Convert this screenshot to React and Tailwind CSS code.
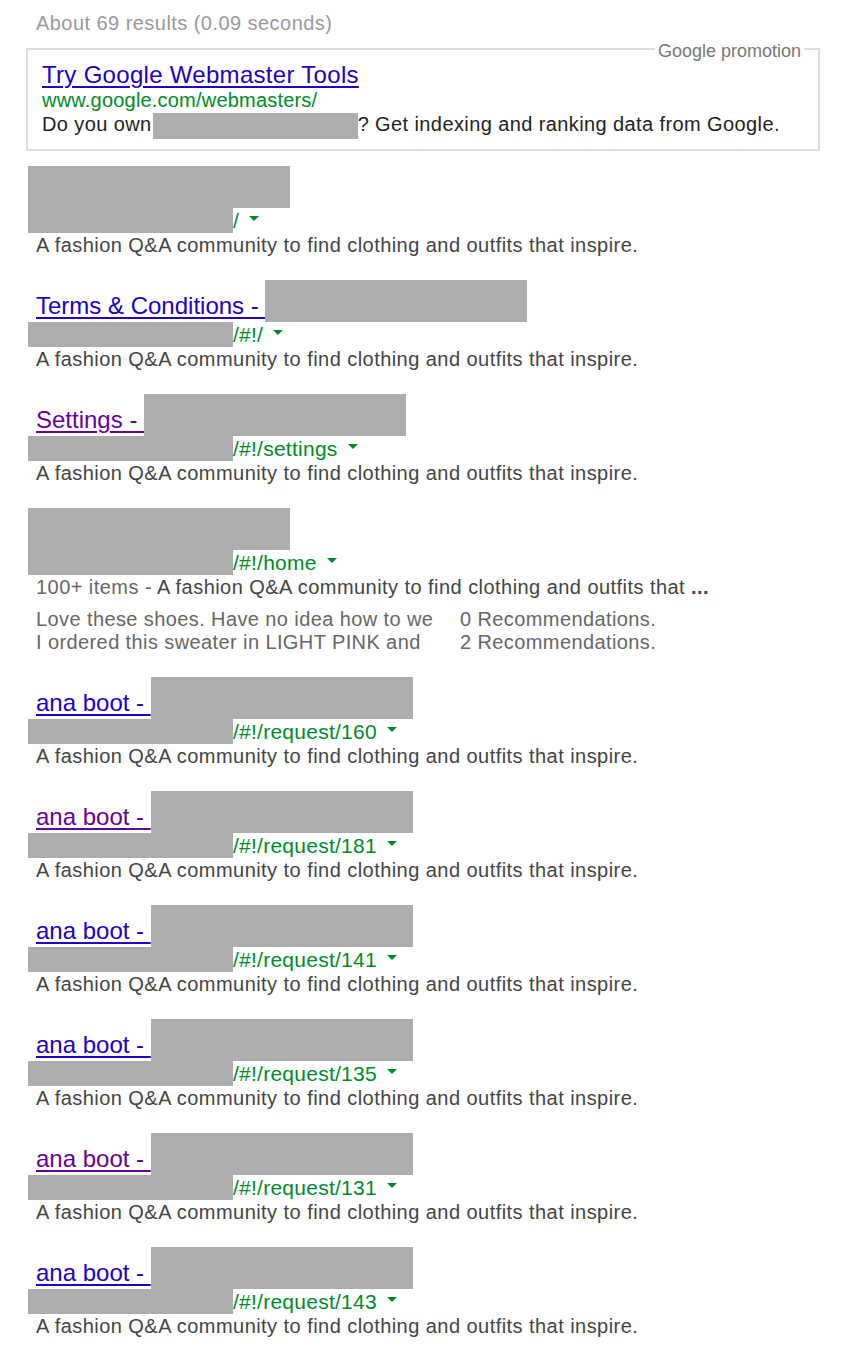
const DESC = "A fashion Q&A community to find clothing and outfits that inspire.";

const results = [
  { title: null, path: "/" },
  { title: "Terms & Conditions - ", visited: false, path: "/#!/" },
  { title: "Settings - ", visited: true, path: "/#!/settings" },
  { title: null, path: "/#!/home", items: true },
  { title: "ana boot - ", visited: false, path: "/#!/request/160" },
  { title: "ana boot - ", visited: true, path: "/#!/request/181" },
  { title: "ana boot - ", visited: false, path: "/#!/request/141" },
  { title: "ana boot - ", visited: false, path: "/#!/request/135" },
  { title: "ana boot - ", visited: true, path: "/#!/request/131" },
  { title: "ana boot - ", visited: false, path: "/#!/request/143" },
];

function Result({ r, first }) {
  return (
    <div className={first ? "mt-[28px]" : "mt-[36px]"}>
      {/* title line, the grey redaction rises above it */}
      <div className="flex h-[29px] items-end">
        {r.title && (
          <a
            href="#"
            className={
              "self-start whitespace-pre text-[24px] leading-[26px] underline underline-offset-[3px] " +
              (r.visited ? "text-[#660099]" : "text-[#2200c1]")
            }
          >
            {r.title}
          </a>
        )}
        <div className={"h-[42px] w-[262px] shrink-0 bg-[#adadad] " + (r.title ? "" : "-ml-[8px]")} />
      </div>

      {/* url line */}
      <div className="-ml-[8px] flex h-[25px] items-start">
        <div className="h-[25px] w-[205px] shrink-0 bg-[#adadad]" />
        <span className="text-[21px] leading-[25px] tracking-[0.25px] text-[#008b2a]">{r.path}</span>
        <span className="ml-[10px] mt-[8px] h-0 w-0 border-x-[5.5px] border-t-[5px] border-x-transparent border-t-[#008b2a]" />
      </div>

      {r.items ? (
        <>
          <p className="text-[20px] leading-[24px] tracking-[0.45px] text-[#444]">
            <span className="text-[#666]">100+ items - </span>
            A fashion Q&A community to find clothing and outfits that <b>...</b>
          </p>
          <div className="mt-[9px] grid grid-cols-[424px_auto] text-[20px] leading-[23px] tracking-[0.4px] text-[#666]">
            <span className="whitespace-nowrap">Love these shoes. Have no idea how to we</span>
            <span>0 Recommendations.</span>
            <span className="whitespace-nowrap">I ordered this sweater in LIGHT PINK and</span>
            <span>2 Recommendations.</span>
          </div>
        </>
      ) : (
        <p className="text-[20px] leading-[24px] tracking-[0.45px] text-[#444]">{DESC}</p>
      )}
    </div>
  );
}

export default function App() {
  return (
    <div className="min-h-[1353px] w-[850px] bg-white font-['Liberation_Sans',Arial,sans-serif]">
      <p className="pl-[36px] pt-[11px] text-[20px] leading-[24px] tracking-[0.45px] text-[#999]">
        About 69 results (0.09 seconds)
      </p>

      {/* promotion box */}
      <div className="relative ml-[26px] mt-[13px] w-[794px] border-2 border-[#dddddd] px-[14px] pb-[13px] pt-[12px]">
        <span className="absolute -top-[9px] right-[14px] bg-white px-[3px] text-[18px] leading-[20px] text-[#777]">
          Google promotion
        </span>
        <a
          href="#"
          className="block text-[24px] leading-[26px] tracking-[0.3px] text-[#2200c1] underline underline-offset-[3px]"
        >
          Try Google Webmaster Tools
        </a>
        <p className="text-[20px] leading-[24px] tracking-[0.2px] text-[#008b2a]">www.google.com/webmasters/</p>
        <div className="flex h-[24px] items-start text-[20px] leading-[24px] tracking-[0.4px] text-[#222]">
          <span className="whitespace-pre">Do you own</span>
          <div className="ml-[1px] mt-[1px] h-[26px] w-[205px] shrink-0 bg-[#adadad]" />
          <span className="whitespace-pre">? Get indexing and ranking data from Google.</span>
        </div>
      </div>

      <div className="pl-[36px]">
        {results.map((r, i) => (
          <Result key={i} r={r} first={i === 0} />
        ))}
      </div>
    </div>
  );
}
